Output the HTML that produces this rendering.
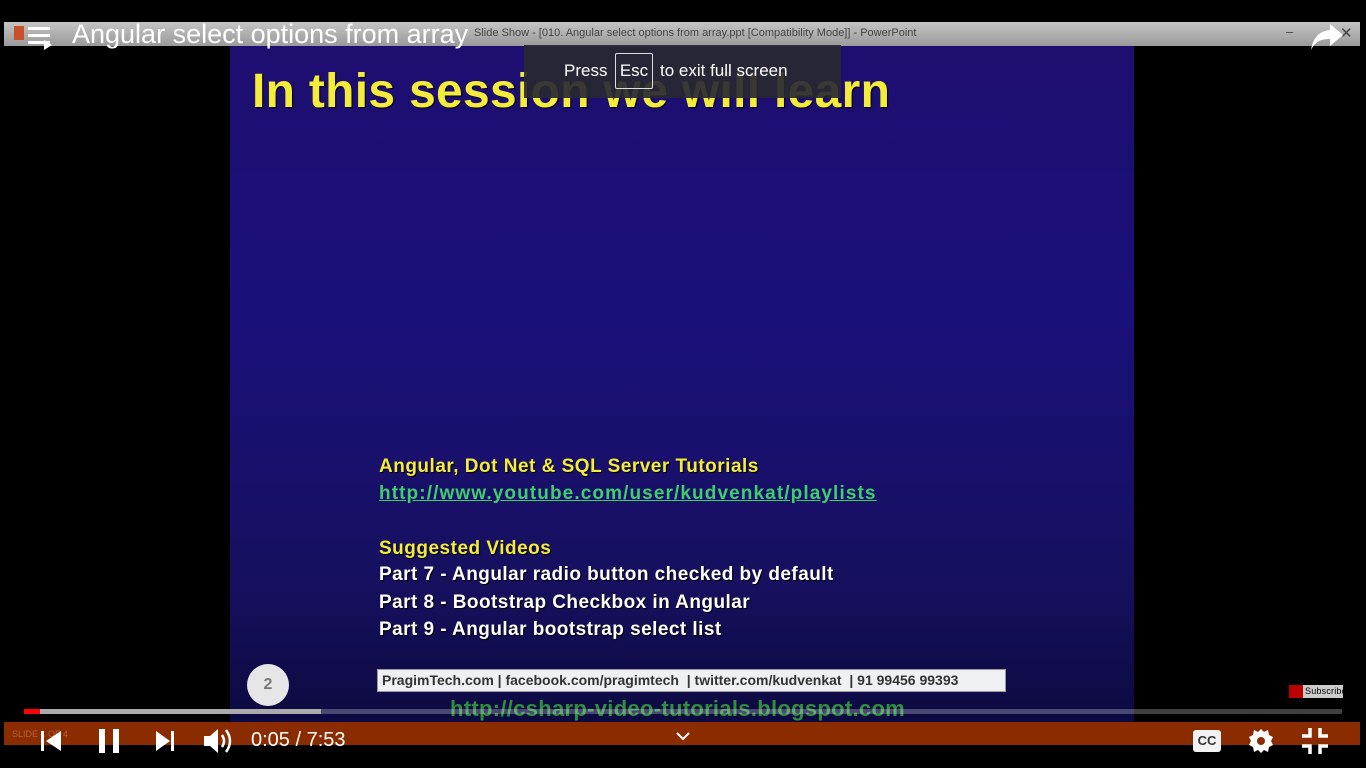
<!DOCTYPE html>
<html><head><meta charset="utf-8"><style>
*{margin:0;padding:0;box-sizing:border-box}
body{width:1366px;height:768px;background:#000;position:relative;overflow:hidden;font-family:"Liberation Sans",sans-serif}
.a{position:absolute}
.tb{left:4px;top:22px;width:1356px;height:24px;background:linear-gradient(#c4c4c4,#9a9a9a);}
.slide{left:230px;top:46px;width:904px;height:676px;background:linear-gradient(#1e0e70 0%,#1a107a 40%,#16105e 80%,#0c0a40 100%)}
.y{color:#f4ec3a;font-weight:bold;text-shadow:1px 1px 1px #000}
.w{color:#fff;font-weight:bold;font-size:19px;letter-spacing:0.45px;text-shadow:1px 1px 1px #000}
.g{color:#3fcf6a;font-weight:bold;text-decoration:underline}
.ob{left:4px;top:722px;width:1356px;height:23px;background:#8a2c00}
</style></head><body>
<div class="a tb"></div>
<div class="a" style="left:14px;top:26px;width:10px;height:14px;background:#c8502a"></div>
<div class="a" style="left:474px;top:27px;font-size:11px;color:#444">Slide Show - [010. Angular select options from array.ppt [Compatibility Mode]] - PowerPoint</div>
<div class="a" style="left:1286px;top:24px;font-size:13px;color:#444">–</div>
<div class="a" style="left:1340px;top:24px;font-size:15px;color:#444">✕</div>
<div class="a slide"></div>
<div class="a y" style="left:252px;top:64px;font-size:48px;letter-spacing:0.3px">In this session we will learn</div>
<div class="a" style="left:524px;top:45px;width:317px;height:53px;background:rgba(40,40,50,0.92)"></div>
<div class="a" style="left:564px;top:61px;font-size:17px;color:#fff">Press</div>
<div class="a" style="left:615px;top:53px;width:38px;height:36px;border:1px solid #ddd;border-radius:2px;color:#fff;font-size:17px;text-align:center;line-height:34px">Esc</div>
<div class="a" style="left:660px;top:61px;font-size:17px;color:#fff">to exit full screen</div>
<div class="a" style="left:28px;top:27px;width:22px;height:3px;background:#fff;box-shadow:0 7px 0 #fff,0 14px 0 #fff"></div>
<div class="a" style="left:44px;top:40px;width:0;height:0;border-left:8px solid #fff;border-top:5px solid transparent;border-bottom:5px solid transparent"></div>
<div class="a" style="left:72px;top:19px;font-size:27px;color:#fff">Angular select options from array</div>
<svg class="a" style="left:1310px;top:22px" width="34" height="30" viewBox="0 0 34 30"><path d="M20 2 L33 13 L20 24 L20 17 C10 17 5 20 1 28 C3 16 9 9 20 8 Z" fill="#fff"/></svg>
<div class="a y" style="left:379px;top:456px;font-size:19px;letter-spacing:0.5px">Angular, Dot Net &amp; SQL Server Tutorials</div>
<div class="a g" style="left:379px;top:483px;font-size:19px;letter-spacing:1.1px">http://www.youtube.com/user/kudvenkat/playlists</div>
<div class="a y" style="left:379px;top:538px;font-size:19px;letter-spacing:0.5px">Suggested Videos</div>
<div class="a w" style="left:379px;top:564px">Part 7 - Angular radio button checked by default</div>
<div class="a w" style="left:379px;top:592px">Part 8 - Bootstrap Checkbox in Angular</div>
<div class="a w" style="left:379px;top:619px">Part 9 - Angular bootstrap select list</div>
<div class="a" style="left:247px;top:664px;width:42px;height:42px;border-radius:50%;background:#e6e6e6;color:#777;font-size:16px;font-weight:bold;text-align:center;line-height:42px">2</div>
<div class="a" style="left:377px;top:669px;width:629px;height:23px;background:#eef0f4;border:1px solid #999;color:#333;font-size:14px;font-weight:bold;line-height:21px;padding-left:4px">PragimTech.com | facebook.com/pragimtech &nbsp;| twitter.com/kudvenkat &nbsp;| 91 99456 99393</div>
<div class="a" style="left:450px;top:696px;font-size:22px;color:#2f8f3f;font-weight:bold;letter-spacing:0.3px">http://csharp-video-tutorials.blogspot.com</div>
<div class="a" style="left:1289px;top:685px;width:54px;height:13px;background:#ccc;font-size:9px;color:#000;line-height:13px;padding-left:16px;letter-spacing:0.2px">Subscribe</div>
<div class="a" style="left:1289px;top:685px;width:14px;height:13px;background:#b00"></div>
<div class="a" style="left:24px;top:709px;width:1318px;height:5px;background:rgba(255,255,255,0.25)"></div>
<div class="a" style="left:24px;top:709px;width:297px;height:5px;background:#aaa"></div>
<div class="a" style="left:24px;top:709px;width:16px;height:5px;background:#f00"></div>
<div class="a ob"></div>
<div class="a" style="left:12px;top:729px;font-size:9px;color:#b5603a">SLIDE 1 OF 4</div>
<svg class="a" style="left:40px;top:729px" width="330" height="24">
<rect x="1" y="2" width="3" height="20" fill="#fff"/><path d="M21 2 L21 22 L6 12Z" fill="#fff"/>
<rect x="59" y="0" width="6" height="24" fill="#fff"/><rect x="73" y="0" width="6" height="24" fill="#fff"/>
<path d="M116 2 L130 12 L116 22Z" fill="#fff"/><rect x="131" y="2" width="3" height="20" fill="#fff"/>
<path d="M164 7 L170 7 L178 0 L178 24 L170 17 L164 17Z" fill="#fff"/>
<path d="M182 6 Q186 12 182 18" stroke="#fff" stroke-width="2.5" fill="none"/>
<path d="M186 1 Q194 12 186 23" stroke="#fff" stroke-width="2.5" fill="none"/>
</svg>
<div class="a" style="left:251px;top:729px;font-size:20px;color:#fff">0:05 / 7:53</div>
<svg class="a" style="left:676px;top:731px" width="14" height="10"><path d="M1 2 L7 8 L13 2" stroke="#fff" stroke-width="2" fill="none"/></svg>
<div class="a" style="left:1193px;top:730px;width:28px;height:22px;background:#f2f2f2;border-radius:3px;color:#333;font-size:13px;font-weight:bold;text-align:center;line-height:22px">CC</div>
<svg class="a" style="left:1248px;top:728px" width="26" height="26" viewBox="0 0 26 26"><path d="M13 1 L16 4 L20 2 L21 7 L25 9 L23 13 L25 17 L21 19 L20 24 L16 22 L13 25 L10 22 L6 24 L5 19 L1 17 L3 13 L1 9 L5 7 L6 2 L10 4Z" fill="#fff"/><circle cx="13" cy="13" r="4" fill="#8a2c00"/></svg>
<svg class="a" style="left:1302px;top:728px" width="26" height="26"><path d="M8 0 V8 H0 M18 0 V8 H26 M0 18 H8 V26 M26 18 H18 V26" stroke="#fff" stroke-width="3.5" fill="none"/></svg>
</body></html>
